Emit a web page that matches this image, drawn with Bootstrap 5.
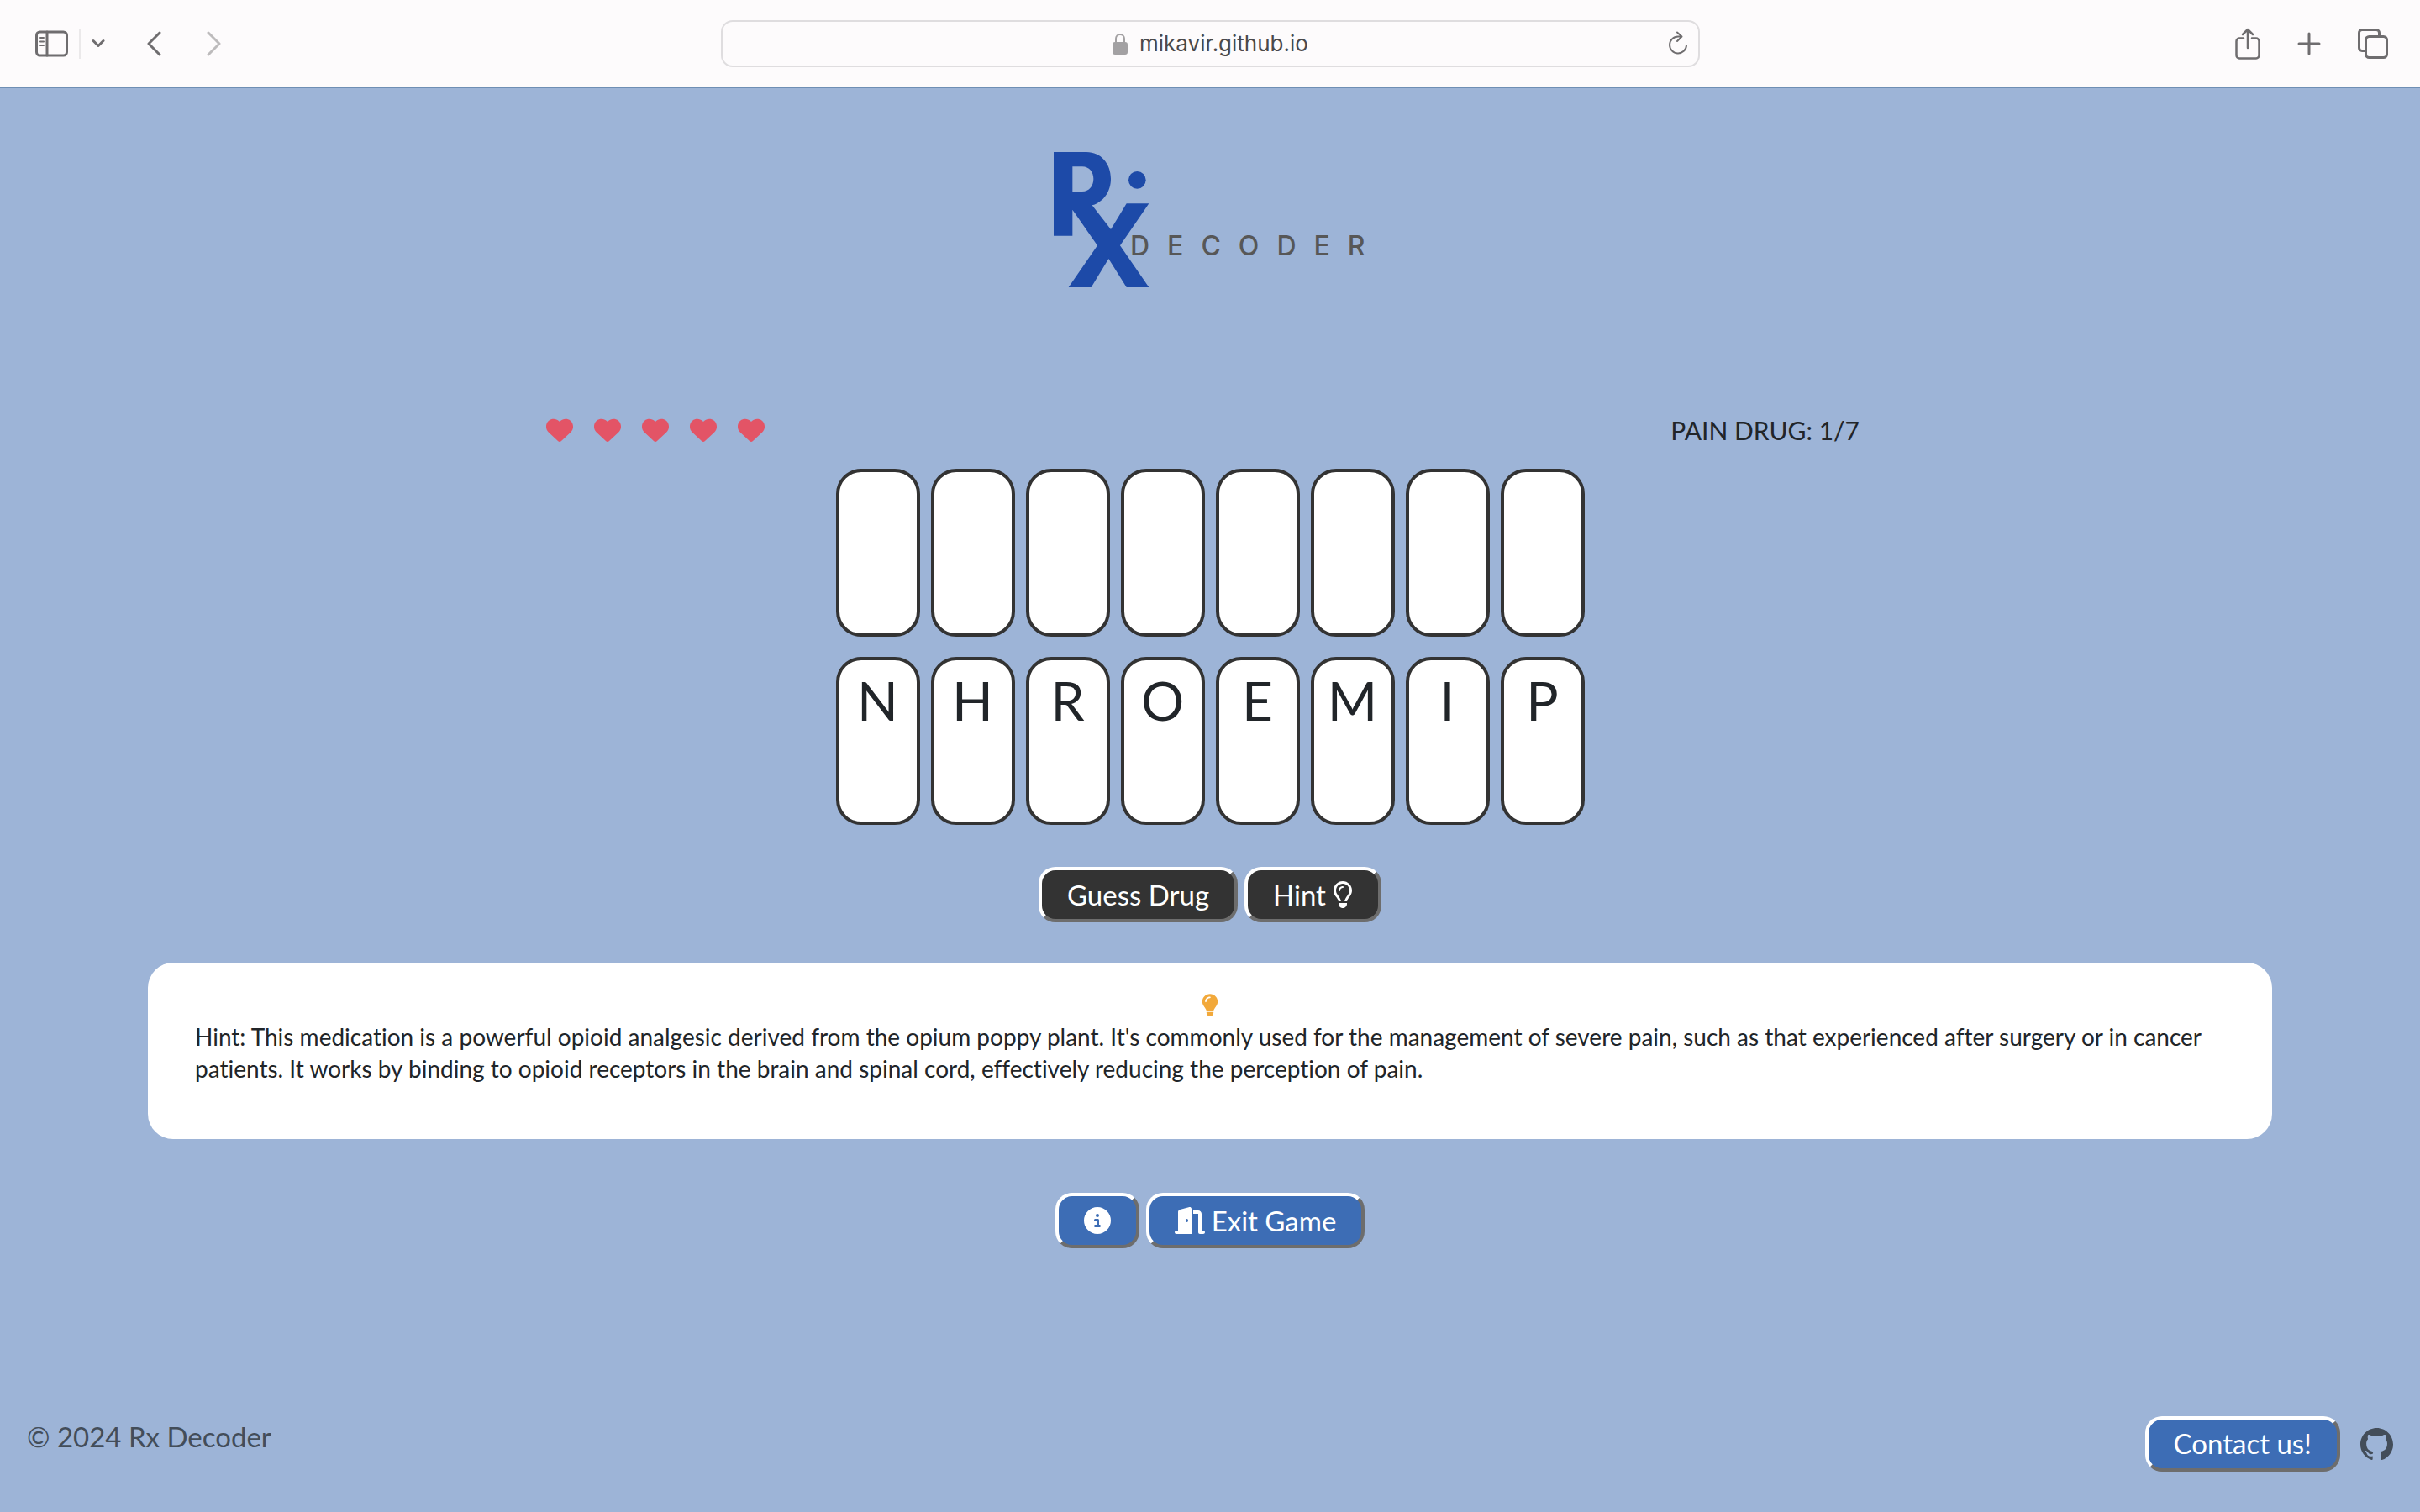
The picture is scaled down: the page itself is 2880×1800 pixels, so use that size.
<!DOCTYPE html>
<html lang="en">
<head>
<meta charset="utf-8">
<meta name="viewport" content="width=device-width, initial-scale=1">
<title>Rx Decoder</title>
<link href="https://cdn.jsdelivr.net/npm/bootstrap@5.3.0/dist/css/bootstrap.min.css" rel="stylesheet">
<style>
  body { background: #9db4d7; color: #212529; font: 400 33px/48px Lato, "Open Sans", sans-serif; font-variant-ligatures: none; }
  svg { display: block; flex: none; }

  .toolbar { background: #fdfbfc; border-bottom: 1px solid #6f8fb4; height: 105px; padding: 0 38px; color: #6f6d6f; }
  .toolbar svg { fill: none; stroke: currentColor; stroke-width: 3; stroke-linecap: round; stroke-linejoin: round; }
  .tool { background: none; border: 0; padding: 0; color: inherit; }
  .tool-split { width: 2px; height: 36px; background: #ebe9ea; margin: 0 13px; }
  .tools-left { flex: 1 1 0; }
  .tools-right { flex: 1 1 0; gap: 44px; }
  .address { width: 1165px; height: 56px; border: 2px solid #dfdddf; border-radius: 14px; padding: 0 12px; }
  .address input { width: 200px; border: 0; padding: 0; background: none; color: #4a494b; font: 400 26px/36px Inter, Roboto, sans-serif; }
  .address .lock { fill: #a3a1a3; stroke: #a3a1a3; margin-right: 14px; }

  .logo-box { padding: 76px 0 0 24px; }
  .wordmark { font: 500 32px Inter, Lato, sans-serif; letter-spacing: 21px; fill: #575757; }

  .status-row { width: 55%; margin-top: 143px; padding: 4px 19px 0 2px; }
  .lives { gap: 25px; color: #e35466; }
  .round-label { font-size: 30px; line-height: 44px; }

  .tile-row { gap: 13px; }
  .tile { width: 100px; height: 200px; background: #fff; border: 4px solid #333; border-radius: 30px; padding: 0; color: #212529; font-size: 64px; line-height: 96px; }

  .actions { margin-top: 50px; }
  .game-btn { height: 66px; border: 4px solid; border-color: #fff #6d6d6d #6d6d6d #fff; border-radius: 20px; padding: 0 30px; color: #fff; line-height: 56px; text-decoration: none; gap: 8px; }
  .btn-dim { background: #333; }
  .btn-blue { background: #3d6db5; }
  .hint-card { background: #fff; border-radius: 30px; margin: 48px 176px 64px; padding: 31px 56px 65px; font-size: 28px; line-height: 38px; }
  .hint-bulb { height: 38px; color: #f2a93b; }
  .page-foot { padding: 0 32px 48px; color: #434d59; }
</style>
</head>
<body class="min-vh-100 d-flex flex-column">

<header class="toolbar d-flex align-items-center">
  <div class="tools-left d-flex align-items-center">
    <button class="tool ms-1" aria-label="Show sidebar"><svg width="39" height="32" viewBox="0 0 39 32"><rect x="1.5" y="2" width="36" height="28" rx="4"/><path d="M14 2v28"/><path d="M6 9h4M6 13.500h4M6 18h4" stroke-width="2"/></svg></button>
    <span class="tool-split"></span>
    <button class="tool" aria-label="Tab groups"><svg width="16" height="12" viewBox="0 0 16 12"><path d="M2 2.500l6 6 6-6"/></svg></button>
    <button class="tool ms-5" aria-label="Back"><svg width="20" height="30" viewBox="0 0 20 30"><path d="M17 2L4 15l13 13"/></svg></button>
    <button class="tool ms-5" aria-label="Forward" disabled><svg class="ms-1" width="20" height="30" viewBox="0 0 20 30" stroke-opacity=".45"><path d="M3 2l13 13L3 28"/></svg></button>
  </div>
  <div class="address d-flex align-items-center">
    <div class="flex-grow-1 d-flex align-items-center justify-content-center ps-4">
      <svg class="lock" width="18" height="26" viewBox="0 0 18 26"><rect x="1" y="12" width="16" height="13" rx="2" stroke-width="2"/><path d="M4 12V7a5 5 0 0 1 10 0v5" fill="none" stroke-width="2"/></svg>
      <input type="text" value="mikavir.github.io" aria-label="Address">
    </div>
    <button class="tool" aria-label="Reload"><svg width="24" height="30" viewBox="0 0 24 30"><path d="M22 17a10 10 0 1 1-10-10.500h4M11 1.500l5.500 5L11 12" stroke-width="2"/></svg></button>
  </div>
  <div class="tools-right d-flex align-items-center justify-content-end">
    <button class="tool" aria-label="Share"><svg width="30" height="40" viewBox="0 0 30 40"><path d="M10 13.500H5a3.500 3.500 0 0 0-3.500 3.500v17A3.500 3.500 0 0 0 5 37.500h20a3.500 3.500 0 0 0 3.500-3.500V17a3.500 3.500 0 0 0-3.500-3.500h-5M15 25V4M9 9l6-6 6 6" stroke-width="2.500"/></svg></button>
    <button class="tool" aria-label="New tab"><svg width="28" height="28" viewBox="0 0 28 28"><path d="M14 2v24M2 14h24"/></svg></button>
    <button class="tool" aria-label="Tab overview"><svg width="36" height="36" viewBox="0 0 36 36"><rect x="9.500" y="9.500" width="25" height="25" rx="4"/><path d="M9 26.500H5A3.500 3.500 0 0 1 1.500 23V5A3.500 3.500 0 0 1 5 1.500h17A3.500 3.500 0 0 1 25.500 5v4"/></svg></button>
  </div>
</header>

<main class="d-flex flex-column align-items-center">
  <a class="logo-box" href="#" aria-label="Rx Decoder home">
    <svg width="396" height="162" viewBox="0 0 396 162">
      <g fill="#1d4aa8" transform="scale(.3333) translate(-101 -93)">
        <path fill-rule="evenodd" d="M101 93H218C270 93 305 135 305 188C305 235 278 272 238 283L305 369L361 277H441L338 427L441 576H361L297 474L235 576H154L257 427L168 299V392H101ZM168 145V234H203C228 234 243 214 243 189C243 165 228 145 203 145Z"/>
        <circle cx="399" cy="193" r="31"/>
      </g>
      <text class="wordmark" x="91" y="123">DECODER</text>
    </svg>
  </a>

  <div class="status-row d-flex justify-content-between align-items-center">
    <div class="lives d-flex" role="img" aria-label="Five lives left">
      <svg width="32" height="32" viewBox="0 0 512 512" fill="currentColor"><path id="heart" d="M47.600 300.400L228.300 469.100c7.500 7 17.400 10.900 27.700 10.900s20.200-3.900 27.700-10.900L464.400 300.400c30.400-28.300 47.600-68 47.600-109.500v-5.800c0-69.900-50.500-129.500-119.400-141C347 36.500 300.600 51.400 268 84L256 96 244 84c-32.600-32.600-79-47.500-124.600-39.900C50.500 55.600 0 115.200 0 185.100v5.800c0 41.500 17.200 81.200 47.600 109.500z"/></svg>
      <svg width="32" height="32" viewBox="0 0 512 512" fill="currentColor"><use href="#heart"/></svg>
      <svg width="32" height="32" viewBox="0 0 512 512" fill="currentColor"><use href="#heart"/></svg>
      <svg width="32" height="32" viewBox="0 0 512 512" fill="currentColor"><use href="#heart"/></svg>
      <svg width="32" height="32" viewBox="0 0 512 512" fill="currentColor"><use href="#heart"/></svg>
    </div>
    <span class="round-label">PAIN DRUG: 1/7</span>
  </div>

  <div class="tile-row d-flex justify-content-center mt-4">
    <div class="tile"></div><div class="tile"></div><div class="tile"></div><div class="tile"></div>
    <div class="tile"></div><div class="tile"></div><div class="tile"></div><div class="tile"></div>
  </div>
  <div class="tile-row d-flex justify-content-center mt-4">
    <button class="tile d-flex justify-content-center align-items-start">N</button>
    <button class="tile d-flex justify-content-center align-items-start">H</button>
    <button class="tile d-flex justify-content-center align-items-start">R</button>
    <button class="tile d-flex justify-content-center align-items-start">O</button>
    <button class="tile d-flex justify-content-center align-items-start">E</button>
    <button class="tile d-flex justify-content-center align-items-start">M</button>
    <button class="tile d-flex justify-content-center align-items-start">I</button>
    <button class="tile d-flex justify-content-center align-items-start">P</button>
  </div>

  <div class="actions d-flex justify-content-center gap-2">
    <button class="game-btn btn-dim">Guess Drug</button>
    <button class="game-btn btn-dim d-flex align-items-center">Hint
      <svg width="24" height="32" viewBox="0 0 384 512" fill="currentColor"><path d="M297.200 248.900C311.600 228.300 320 203.200 320 176c0-70.700-57.300-128-128-128S64 105.300 64 176c0 27.200 8.400 52.300 22.800 72.900c3.700 5.300 8.100 11.300 12.800 17.700c12.900 17.700 28.300 38.900 39.800 59.800c10.400 19 15.700 38.800 18.300 57.500H109c-2.200-12-5.900-23.700-11.800-34.500c-9.900-18-22.200-34.900-34.500-51.800c-5.200-7.100-10.400-14.200-15.400-21.400C27.600 247.900 16 213.300 16 176C16 78.800 94.800 0 192 0s176 78.800 176 176c0 37.300-11.600 71.900-31.400 100.300c-5 7.200-10.200 14.300-15.400 21.400c-12.300 16.800-24.600 33.700-34.500 51.800c-5.900 10.800-9.600 22.500-11.800 34.500H226.400c2.600-18.700 7.900-38.600 18.300-57.500c11.500-20.900 26.900-42.100 39.800-59.800c4.700-6.400 9-12.400 12.700-17.700zM192 128c-26.500 0-48 21.500-48 48c0 8.800-7.200 16-16 16s-16-7.200-16-16c0-44.200 35.800-80 80-80c8.800 0 16 7.200 16 16s-7.200 16-16 16zm0 384c-44.200 0-80-35.800-80-80V416H272v16c0 44.200-35.800 80-80 80z"/></svg>
    </button>
  </div>

  <section class="hint-card align-self-stretch">
    <div class="hint-bulb d-flex justify-content-center align-items-center">
      <svg width="20" height="27" viewBox="0 0 384 512" fill="currentColor"><path d="M272 384c9.600-31.900 29.500-59.100 49.200-86.200c5.200-7.100 10.400-14.200 15.400-21.400c19.800-28.500 31.400-63 31.400-100.300C368 78.800 289.200 0 192 0S16 78.800 16 176c0 37.300 11.600 71.900 31.400 100.300c5 7.200 10.200 14.300 15.400 21.400c19.800 27.100 39.700 54.400 49.200 86.200H272zM192 512c44.200 0 80-35.800 80-80V416H112v16c0 44.200 35.800 80 80 80zM112 176c0 8.800-7.200 16-16 16s-16-7.200-16-16c0-61.900 50.100-112 112-112c8.800 0 16 7.200 16 16s-7.200 16-16 16c-44.200 0-80 35.800-80 80z"/></svg>
    </div>
    <p class="mb-0">Hint: This medication is a powerful opioid analgesic derived from the opium poppy plant. It's commonly used for the management of severe pain, such as that experienced after surgery or in cancer patients. It works by binding to opioid receptors in the brain and spinal cord, effectively reducing the perception of pain.</p>
  </section>

  <div class="d-flex justify-content-center gap-2">
    <button class="game-btn btn-blue d-flex align-items-center" aria-label="How to play"><svg width="32" height="32" viewBox="0 0 512 512" fill="currentColor"><path d="M256 512A256 256 0 1 0 256 0a256 256 0 1 0 0 512zM216 336h24V272H216c-13.300 0-24-10.700-24-24s10.700-24 24-24h48c13.300 0 24 10.700 24 24v88h8c13.300 0 24 10.700 24 24s-10.700 24-24 24H216c-13.300 0-24-10.700-24-24s10.700-24 24-24zm40-208a32 32 0 1 1 0 64 32 32 0 1 1 0-64z"/></svg></button>
    <a class="game-btn btn-blue d-flex align-items-center" href="#"><svg width="36" height="32" viewBox="0 0 576 512" fill="currentColor"><path d="M320 32c0-9.900-4.500-19.200-12.300-25.200S289.800-1.400 280.200 1l-179.900 45C79 51.300 64 70.500 64 92.500V448H32c-17.700 0-32 14.300-32 32s14.300 32 32 32H96 288h32V480 32zM256 256c0 17.700-10.700 32-24 32s-24-14.300-24-32s10.700-32 24-32s24 14.300 24 32zm96-128h96V480c0 17.700 14.300 32 32 32h64c17.700 0 32-14.300 32-32s-14.300-32-32-32H512V128c0-35.300-28.700-64-64-64H352v64z"/></svg>Exit Game</a>
  </div>
</main>

<footer class="page-foot d-flex justify-content-between mt-auto">
  <span>© 2024 Rx Decoder</span>
  <div class="d-flex align-items-center gap-4">
    <a class="game-btn btn-blue" href="#">Contact us!</a>
    <a class="text-reset" href="#" aria-label="GitHub"><svg width="39" height="39" viewBox="0 0 16 16" fill="currentColor"><path d="M8 0C3.580 0 0 3.580 0 8c0 3.540 2.290 6.530 5.470 7.590.4.070.55-.17.55-.38 0-.19-.01-.82-.01-1.490-2.010.37-2.530-.49-2.690-.94-.09-.23-.48-.94-.82-1.130-.28-.15-.68-.52-.01-.53.63-.01 1.080.58 1.230.82.72 1.210 1.870.87 2.330.66.070-.52.28-.87.51-1.070-1.780-.2-3.640-.89-3.640-3.950 0-.87.31-1.590.82-2.150-.08-.2-.36-1.020.08-2.120 0 0 .67-.21 2.200.82.64-.18 1.320-.27 2-.27.68 0 1.360.09 2 .27 1.530-1.040 2.200-.82 2.200-.82.44 1.100.16 1.920.08 2.120.51.56.82 1.270.82 2.150 0 3.070-1.870 3.750-3.650 3.950.29.25.54.73.54 1.480 0 1.070-.01 1.930-.01 2.200 0 .21.15.46.55.38A8.010 8.010 0 0 0 16 8c0-4.420-3.580-8-8-8z"/></svg></a>
  </div>
</footer>

<script src="https://cdn.jsdelivr.net/npm/bootstrap@5.3.0/dist/js/bootstrap.bundle.min.js"></script>
</body>
</html>
